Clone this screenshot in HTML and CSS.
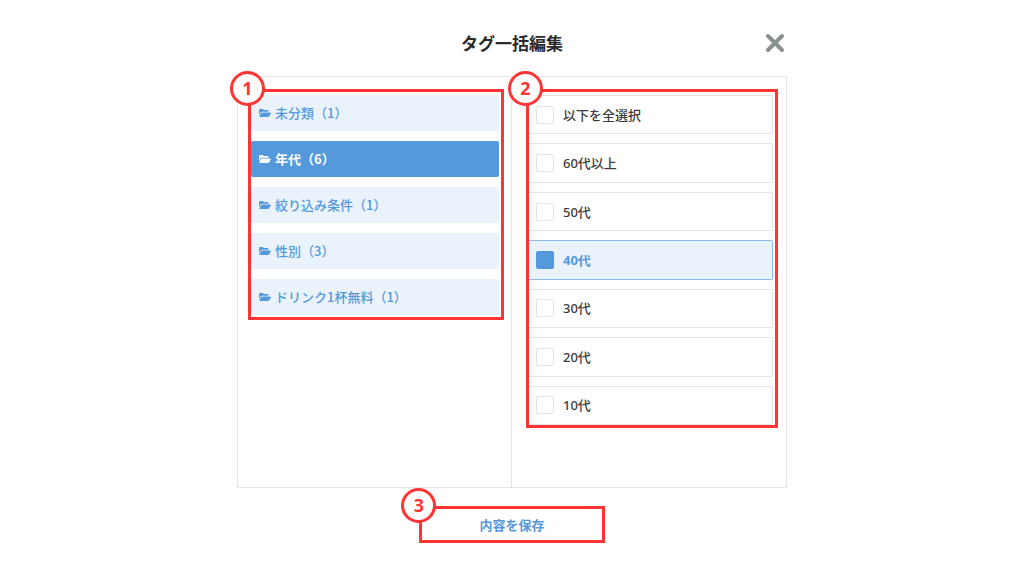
FILE: index.html
```html
<!DOCTYPE html>
<html lang="ja">
<head>
    <meta charset="UTF-8">
    <meta name="viewport" content="width=device-width, initial-scale=1.0">
    <title>タグ一括編集</title>
    <link rel="stylesheet" href="styles.css">
</head>
<body>

    <!-- Folder icon shared by the category buttons -->
    <svg class="icon-defs" aria-hidden="true">
        <symbol id="folder-open" viewBox="0 0 24 16">
            <path d="M0 13V2Q0 0 2 0H7Q9 0 9 2H17Q19 2 19 4V5.500H6Q4 5.500 3 7Z"/>
            <path d="M6 7H22.500Q24.500 7 23.500 9L20.500 14.500Q19.500 16 18 16H1.500Q0 16 1 14.500L4 8.500Q4.800 7 6 7Z"/>
        </symbol>
    </svg>

    <main class="modal">
        <header class="modal-header">
            <h1>タグ一括編集</h1>
            <button class="close-button" type="button" aria-label="閉じる">
                <svg viewBox="0 0 20 20" aria-hidden="true">
                    <path d="M3 3L17 17M17 3L3 17"/>
                </svg>
            </button>
        </header>

        <div class="panels">
            <!-- Categories -->
            <section class="panel panel-folders">
                <div class="callout callout-folders">
                    <span class="callout-number">1</span>
                    <div class="folder-list">
                        <button class="folder" type="button"><svg class="folder-icon" aria-hidden="true"><use href="#folder-open"/></svg>未分類（1）</button>
                        <button class="folder active" type="button"><svg class="folder-icon" aria-hidden="true"><use href="#folder-open"/></svg>年代（6）</button>
                        <button class="folder" type="button"><svg class="folder-icon" aria-hidden="true"><use href="#folder-open"/></svg>絞り込み条件（1）</button>
                        <button class="folder" type="button"><svg class="folder-icon" aria-hidden="true"><use href="#folder-open"/></svg>性別（3）</button>
                        <button class="folder" type="button"><svg class="folder-icon" aria-hidden="true"><use href="#folder-open"/></svg>ドリンク1杯無料（1）</button>
                    </div>
                </div>
            </section>

            <!-- Tags in the selected category -->
            <section class="panel panel-tags">
                <div class="callout callout-tags">
                    <span class="callout-number">2</span>
                    <div class="tag-list">
                        <label class="tag"><input type="checkbox">以下を全選択</label>
                        <label class="tag"><input type="checkbox">60代以上</label>
                        <label class="tag"><input type="checkbox">50代</label>
                        <label class="tag"><input type="checkbox" checked>40代</label>
                        <label class="tag"><input type="checkbox">30代</label>
                        <label class="tag"><input type="checkbox">20代</label>
                        <label class="tag"><input type="checkbox">10代</label>
                    </div>
                </div>
            </section>
        </div>

        <footer class="modal-footer">
            <div class="callout">
                <span class="callout-number">3</span>
                <button class="save-button" type="button">内容を保存</button>
            </div>
        </footer>
    </main>

</body>
</html>
```
FILE: styles.css
```css
* {
    box-sizing: border-box;
}

body {
    margin: 0;
    background-color: #fff;
    color: #3c3c3c;
    font-family: "Noto Sans CJK JP", sans-serif;
    font-size: 13px;
    font-weight: 500;
    line-height: 20px;
}

button {
    border: none;
    background: none;
    padding: 0;
    font: inherit;
    cursor: pointer;
}

.icon-defs {
    display: none;
}

.modal {
    max-width: 550px;
    margin: 0 auto;
}

/* Header */
.modal-header {
    display: grid;
    grid-template-columns: 1fr auto 1fr;
    align-items: center;
    padding: 31px 2px 21px;
}

.modal-header h1 {
    grid-column: 2;
    margin: 0;
    color: #2b2b2b;
    font-size: 17px;
    line-height: 24px;
}

.close-button {
    justify-self: end;
    width: 20px;
    height: 20px;
}

.close-button svg {
    display: block;
    width: 20px;
    height: 20px;
    fill: none;
    stroke: #899092;
    stroke-width: 4;
    stroke-linecap: round;
}

/* Panels */
.panels {
    display: grid;
    grid-template-columns: 1fr 1fr;
    min-height: 412px;
    border: 1px solid #e4e4e4;
}

.panel-folders {
    padding: 12px 7px 12px 10px;
    border-right: 1px solid #e4e4e4;
}

.panel-tags {
    padding: 12px 8px 12px 14px;
}

/* Numbered callouts */
.callout {
    position: relative;
    border: 3px solid #ff3535;
}

.callout-number {
    position: absolute;
    top: -21px;
    left: -21px;
    width: 35px;
    height: 35px;
    border: 3px solid #ff3535;
    border-radius: 50%;
    background-color: #fff;
    color: #ff3535;
    font-family: "Noto Sans", sans-serif;
    font-size: 18px;
    font-weight: bold;
    line-height: 29px;
    text-align: center;
}

.callout-folders {
    padding: 3px 2px 2px 0;
}

.callout-tags {
    padding: 3px 2px 0 0;
}

/* Category buttons */
.folder-list {
    display: flex;
    flex-direction: column;
    gap: 10px;
}

.folder {
    display: flex;
    align-items: center;
    gap: 4px;
    padding: 8px;
    border-radius: 2px;
    background-color: #eaf3fb;
    color: #5599dd;
    text-align: left;
}

.folder.active {
    background-color: #5599dd;
    color: #fff;
    font-weight: bold;
}

.folder-icon {
    width: 12px;
    height: 8px;
    fill: currentColor;
}

/* Tag checkboxes */
.tag-list {
    display: grid;
    grid-auto-rows: 1fr;
    gap: 9px;
    min-height: 330px;
}

.tag {
    display: flex;
    align-items: center;
    gap: 9px;
    padding: 0 7px;
    border: 1px solid #e4e4e4;
    border-left: none;
    border-radius: 0 2px 2px 0;
    font-family: "Noto Sans", "Noto Sans CJK JP", sans-serif;
    cursor: pointer;
}

.tag input {
    appearance: none;
    width: 18px;
    height: 18px;
    margin: 0;
    border: 1px solid #e2e2e2;
    border-radius: 2px;
    background-color: #fff;
}

.tag input:checked {
    border-color: #5599dd;
    background-color: #5599dd;
}

.tag:has(input:checked) {
    border-color: #8dbbea;
    background-color: #eaf3fb;
    color: #5599dd;
    font-weight: bold;
}

/* Footer */
.modal-footer {
    display: flex;
    justify-content: center;
    padding: 18px 0 32px;
}

.save-button {
    display: block;
    padding: 6px 57px 5px;
    color: #5599dd;
    font-weight: bold;
}
```
